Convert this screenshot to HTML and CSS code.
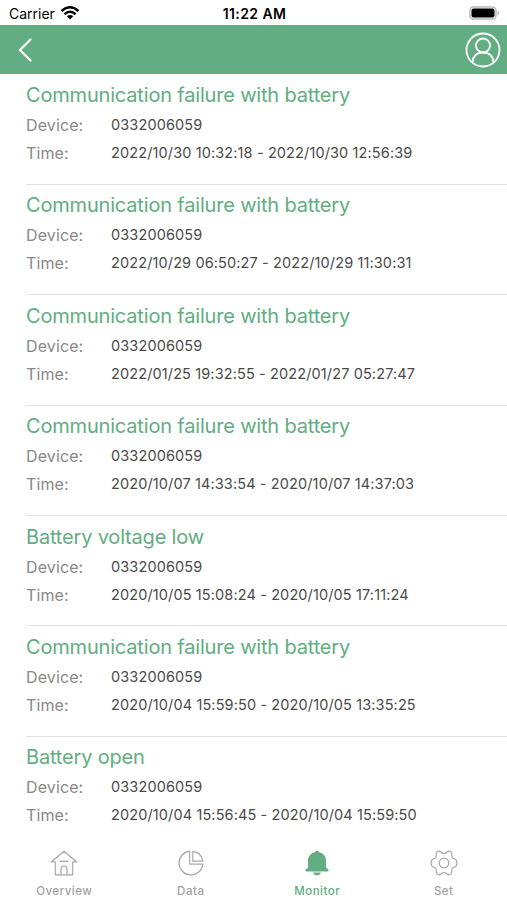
FILE: index.html
```
<!DOCTYPE html>
<html lang="en"><head><meta charset="utf-8"><title>Monitor</title><link rel="stylesheet" href="styles.css"></head>
<body>
<div class="status"><div class="carrier"><span>Carrier</span><svg width="20" height="14" viewBox="0 0 20 14" fill="none" stroke="#000" stroke-width="2.5"><path d="M1.500 5Q10-2.500 18.500 5M4.500 8.200Q10 3.400 15.500 8.200"/><path d="M10 13.500L6.800 10.300Q10 7.700 13.200 10.300Z" fill="#000" stroke="none"/></svg></div><b class="clock">11:22 AM</b><svg class="battery" width="31" height="14" viewBox="0 0 31 14"><rect x="1" y="1" width="26" height="12" rx="3.500" fill="none" stroke="#bbb" stroke-width="1.500"/><rect x="2.500" y="2.500" width="23" height="9" rx="2"/><path d="M28.500 4.500Q32 7 28.500 9.500Z" fill="#bbb"/></svg></div>
<header><svg class="back" width="16" height="26" viewBox="0 0 16 26"><path d="M13.500 2.500L3 13L13.500 23.500"/></svg><svg width="36" height="36" viewBox="0 0 36 36"><circle cx="18" cy="18" r="16.500"/><circle cx="18" cy="13.500" r="7"/><path d="M7.500 30.500C8 24 12 20.500 18 20.500S28 24 28.500 30.500"/></svg></header>
<main id="list"></main>
<nav>
<div class="tab"><svg width="28" height="28" viewBox="0 0 28 28"><path d="M14 2.200L26.500 12.800H22.700V25.800H5.300V12.800H1.500ZM11 25.500V20Q11 17 14 17T17 20V25.500M9.500 12.300H18.500"/></svg><span>Overview</span></div>
<div class="tab"><svg width="28" height="28" viewBox="0 0 28 28"><path d="M12.700 2.200A11.900 11.900 0 1 0 25.800 15.200H12.700ZM15.800 2.300V12.200H25.800Q24.500 3.500 15.800 2.300Z"/></svg><span>Data</span></div>
<div class="tab active"><svg width="28" height="28" viewBox="0 0 28 28"><path d="M14 1.500Q15.700 1.500 16 3.300C20.500 4.200 23 7.500 23 12V18.500Q23.300 19.300 25 20Q26.500 22.500 24.500 22.500H3.500Q1.500 22.500 3 20Q4.700 19.300 5 18.500V12C5 7.500 7.500 4.200 12 3.300Q12.300 1.500 14 1.500ZM9.800 23.500H18.200Q17 26.200 14 26.200T9.800 23.500Z"/></svg><span>Monitor</span></div>
<div class="tab"><svg width="28" height="28" viewBox="0 0 28 28"><path d="M14 4.700Q15.500 4.700 17 3Q18.500 1.600 20.500 2.700Q22.400 3.900 21.800 6Q21.400 8.500 23 9.200L25 10Q27 11 27 14T25 18L23 18.800Q21.400 19.500 21.800 22Q22.400 24.100 20.500 25.300Q18.500 26.400 17 25Q15.500 23.300 14 23.300T11 25Q9.500 26.400 7.500 25.300Q5.600 24.100 6.200 22Q6.600 19.500 5 18.800L3 18Q1 17 1 14T3 10L5 9.200Q6.600 8.500 6.200 6Q5.600 3.900 7.500 2.700Q9.500 1.600 11 3Q12.500 4.700 14 4.700Z"/><circle cx="14" cy="14" r="4.800"/></svg><span>Set</span></div>
</nav>
<script src="script.js"></script>
</body></html>
```
FILE: styles.css
```
*{box-sizing:border-box}
body{margin:0;width:507px;height:900px;display:flex;flex-direction:column;background:#fff;font-family:Inter,sans-serif;overflow:hidden}
.status{height:25.400px;display:grid;grid-template-columns:1fr auto 1fr;align-items:center;padding:1px 7px 0 9px;font-size:14px}
.carrier{display:flex;gap:5px;align-items:center}
.clock{font-weight:600;letter-spacing:.4px}
.battery{justify-self:end}
header{height:48.600px;background:#62ad82;display:flex;justify-content:space-between;align-items:center;padding:0 6.500px 0 17px}
header svg{fill:none;stroke:#fff;stroke-width:1.800}
header .back{stroke-width:2.300;stroke-linecap:round}
main{flex:1;min-height:0;padding-left:26px}
.event{height:110.400px;padding-top:6.600px;border-bottom:1px solid #e2e2e2}
.event:first-child{height:110.800px;padding-top:7px}
.event:last-child{border:0}
h2{margin:0;font-size:20px;line-height:28px;font-weight:400;letter-spacing:-.18px;color:#62ad82}
.row{display:grid;grid-template-columns:85px 1fr;height:28px;line-height:32px;font-size:16px;letter-spacing:.12px;color:#888}
.row b{font-weight:400;font-size:14.500px;color:#4a4a4a}
nav{height:60px;display:flex;padding-left:1px}
.tab{flex:1;display:flex;flex-direction:column;align-items:center;gap:7px;padding-top:8.500px;font-size:11.500px;line-height:15px;font-weight:500;letter-spacing:.5px;color:#a2a2a2}
.tab svg{flex:none;fill:none;stroke:#a8a8a8;stroke-width:1.200;stroke-linejoin:round}
.tab.active{color:#62ad82}
.tab.active svg{fill:#62ad82;stroke:none}
```
FILE: script.js
```
const failure = 'Communication failure with battery';
const events = [
  [failure, '2022/10/30 10:32:18 - 2022/10/30 12:56:39'],
  [failure, '2022/10/29 06:50:27 - 2022/10/29 11:30:31'],
  [failure, '2022/01/25 19:32:55 - 2022/01/27 05:27:47'],
  [failure, '2020/10/07 14:33:54 - 2020/10/07 14:37:03'],
  ['Battery voltage low', '2020/10/05 15:08:24 - 2020/10/05 17:11:24'],
  [failure, '2020/10/04 15:59:50 - 2020/10/05 13:35:25'],
  ['Battery open', '2020/10/04 15:56:45 - 2020/10/04 15:59:50']
];
document.getElementById('list').innerHTML = events.map(([title, time]) => `<section class="event"><h2>${title}</h2><div class="row"><span>Device:</span><b>0332006059</b></div><div class="row"><span>Time:</span><b>${time}</b></div></section>`).join('');
```
